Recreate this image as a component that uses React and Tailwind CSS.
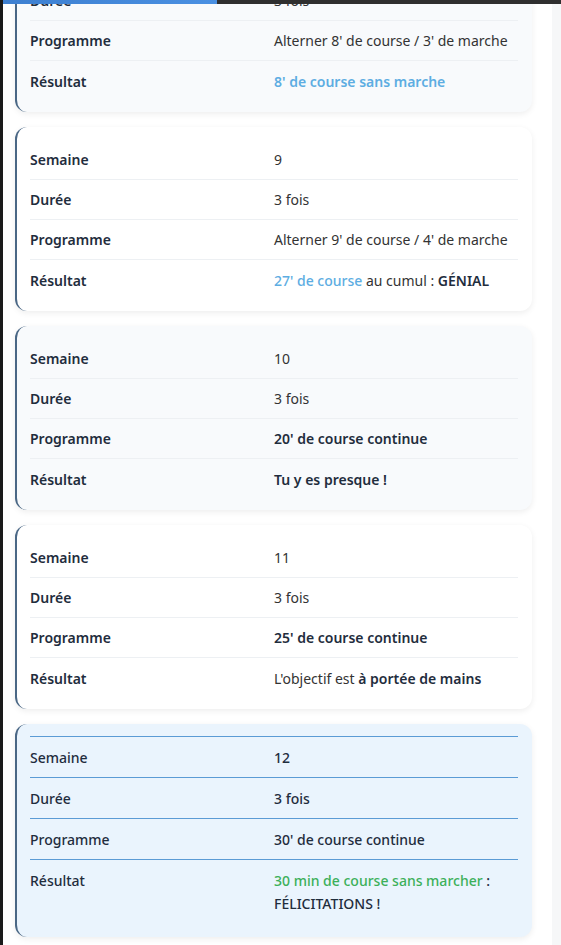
import React from "react";

const Blue = ({ children }) => (
  <span className="font-semibold text-[#5dade2]">{children}</span>
);
const B = ({ children }) => <span className="font-semibold text-[#1f2d3d]">{children}</span>;

const weeks = [
  {
    w: "8",
    d: "3 fois",
    p: "Alterner 8' de course / 3' de marche",
    r: <Blue>8' de course sans marche</Blue>,
    bg: "bg-[#f8fafc]",
  },
  {
    w: "9",
    d: "3 fois",
    p: "Alterner 9' de course / 4' de marche",
    r: (
      <>
        <span className="font-medium text-[#5dade2]">27' de course</span> au cumul : <B>GÉNIAL</B>
      </>
    ),
    bg: "bg-white",
  },
  {
    w: "10",
    d: "3 fois",
    p: <B>20' de course continue</B>,
    r: <B>Tu y es presque !</B>,
    bg: "bg-[#f8fafc]",
  },
  {
    w: "11",
    d: "3 fois",
    p: <B>25' de course continue</B>,
    r: (
      <>
        L'objectif est <B>à portée de mains</B>
      </>
    ),
    bg: "bg-white",
  },
];

function Card({ w, d, p, r, bg }) {
  const rows = [
    ["Semaine", w],
    ["Durée", d],
    ["Programme", p],
    ["Résultat", r],
  ];
  return (
    <div
      className={`${bg} rounded-xl border-l-2 border-[#4a6785] shadow-[0_2px_6px_rgba(0,0,0,0.07)] pl-[13px] pr-[14px] pt-[13px] pb-[11px]`}
    >
      {rows.map(([k, v], i) => (
        <div
          key={k}
          className={`grid grid-cols-2 h-10 items-center ${
            i < 3 ? "border-b border-[#edf0f3]" : ""
          }`}
        >
          <div className="font-semibold text-[#1f2d3d]">{k}</div>
          <div className="text-[#333]">{v}</div>
        </div>
      ))}
    </div>
  );
}

function FinalCard() {
  const rows = [
    ["Semaine", "12"],
    ["Durée", "3 fois"],
    ["Programme", "30' de course continue"],
  ];
  return (
    <div className="bg-[#eaf4fd] rounded-xl border-l-2 border-[#4a6785] shadow-[0_2px_6px_rgba(0,0,0,0.07)] pl-[13px] pr-[14px] pt-[12px] pb-[11px]">
      <div className="border-t-[1.5px] border-[#5b9bd5]">
        {rows.map(([k, v]) => (
          <div
            key={k}
            className="grid grid-cols-2 h-[41px] items-center border-b-[1.5px] border-[#5b9bd5]"
          >
            <div className="font-medium text-[#1f2d3d]">{k}</div>
            <div className="font-medium text-[#1f2d3d]">{v}</div>
          </div>
        ))}
        <div className="grid grid-cols-2 pt-[9px] pb-[11px] leading-[23px]">
          <div className="font-medium text-[#1f2d3d]">Résultat</div>
          <div className="font-medium text-[#1f2d3d]">
            <span className="text-[#3cb05a]">30 min de course sans marcher</span> :
            <br />
            FÉLICITATIONS !
          </div>
        </div>
      </div>
    </div>
  );
}

export default function App() {
  return (
    <div
      className="relative min-h-[945px] bg-white overflow-hidden text-[14px]"
      style={{ fontFamily: '"Noto Sans", "Open Sans", sans-serif' }}
    >
      <div className="flex">
        <div className="flex-1 pl-[15px] pr-[20px] -mt-[72px] flex flex-col gap-[15px] pb-4">
          {weeks.map((c) => (
            <Card key={c.w} {...c} />
          ))}
          <FinalCard />
        </div>
        <div className="w-[9px] bg-[#f6f7f8] self-stretch" />
      </div>
      <div className="absolute top-0 left-0 right-0 h-[4px] bg-[#2f2f2f]">
        <div className="h-full w-[217px] bg-gradient-to-r from-[#3d7fd0] to-[#4a90e2]" />
      </div>
      <div className="absolute top-0 left-0 bottom-0 w-[3px] bg-[#1a1a1a]" />
    </div>
  );
}
